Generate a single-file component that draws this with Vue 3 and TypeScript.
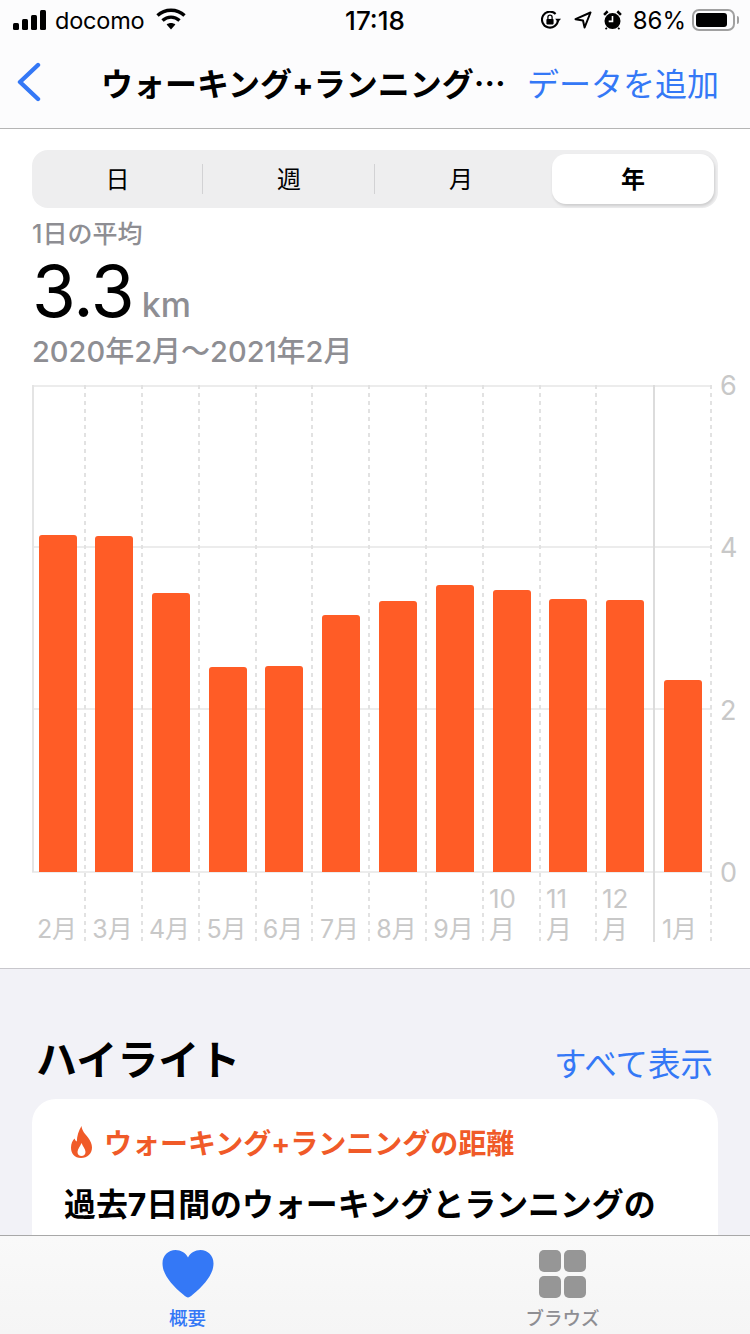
<script setup lang="ts">
interface Month { lines: string[]; width: number; height: number; solid?: boolean }
const months: Month[] = [
  { lines: ['2月'], width: 54, height: 337 },
  { lines: ['3月'], width: 57, height: 336 },
  { lines: ['4月'], width: 57, height: 279 },
  { lines: ['5月'], width: 57, height: 205 },
  { lines: ['6月'], width: 56, height: 206 },
  { lines: ['7月'], width: 57, height: 257 },
  { lines: ['8月'], width: 57, height: 271 },
  { lines: ['9月'], width: 57, height: 287 },
  { lines: ['10', '月'], width: 57, height: 282 },
  { lines: ['11', '月'], width: 56, height: 273 },
  { lines: ['12', '月'], width: 58, height: 272, solid: true },
  { lines: ['1月'], width: 57, height: 192 },
]
const segments = ['日', '週', '月', '年']
const axis = ['6', '4', '2', '0']
</script>

<template>
  <div class="page">
    <header class="top">
      <div class="status">
        <div class="status-left">
          <svg class="signal" width="34" height="20" viewBox="0 0 34 20">
            <rect x="0" y="13" width="6" height="7" rx="1.5" />
            <rect x="9" y="9" width="6" height="11" rx="1.5" />
            <rect x="18" y="5" width="6" height="15" rx="1.5" />
            <rect x="27" y="0" width="6" height="20" rx="1.5" />
          </svg>
          <span class="carrier">docomo</span>
          <svg class="wifi" width="30" height="22" viewBox="0 0 30 22" fill="none" stroke="#000" stroke-width="3.4">
            <path d="M1.5 7.5C9 0.5 21 0.5 28.5 7.5" />
            <path d="M6.5 12.5C11.5 8 18.5 8 23.5 12.5" />
            <path d="M15 21.5L10.6 16.6C13 14.6 17 14.6 19.4 16.6Z" fill="#000" stroke="none" />
          </svg>
        </div>
        <div class="time">17:18</div>
        <div class="status-right">
          <svg width="21" height="18" viewBox="0 0 21 18" fill="none" stroke="#000" stroke-width="2.1">
            <path d="M17 9A8 8 0 1 1 14.600 2.900" />
            <path d="M14.200 7.800L17 11.200L20 7.800Z" fill="#000" stroke="none" />
            <rect x="5.400" y="8" width="7.200" height="5.400" rx="0.800" fill="#000" stroke="none" />
            <path d="M6.900 8V6.200A2.100 2.100 0 0 1 11.100 6.200V8" stroke-width="1.300" />
          </svg>
          <svg class="arrow" width="18" height="18" viewBox="0 0 18 18" fill="none" stroke="#000" stroke-width="2" stroke-linejoin="round">
            <path d="M1.500 8.200L16.500 1.500L10.600 16.500L9 9.600Z" />
          </svg>
          <svg class="alarm" width="19" height="20" viewBox="0 0 18 19">
            <circle cx="9" cy="10.500" r="7.600" fill="#000" />
            <path d="M1 4.600L4.400 1.200M17 4.600L13.600 1.200" stroke="#000" stroke-width="2.400" />
            <path d="M9 5.600V10.800H5.400" stroke="#fff" stroke-width="1.500" fill="none" />
            <path d="M3.600 16.800L2.400 18.400M14.400 16.800L15.600 18.400" stroke="#000" stroke-width="1.600" />
          </svg>
          <span class="pct">86%</span>
          <div class="battery"><div class="battery-fill"></div></div>
          <div class="nub"></div>
        </div>
      </div>
      <nav class="nav">
        <svg class="back" width="26" height="40" viewBox="0 0 26 40" fill="none" stroke="#3478f6" stroke-width="4.400" stroke-linecap="round" stroke-linejoin="round">
          <path d="M22 3L4 20L22 37" />
        </svg>
        <div class="nav-title">ウォーキング+ランニング<span class="dots">…</span></div>
        <div class="nav-action">データを追加</div>
      </nav>
    </header>

    <main class="content">
      <section class="panel">
        <div class="segmented">
          <div v-for="(s, i) in segments" :key="s" class="seg" :class="{ active: i === 3, divided: i < 2 }">{{ s }}</div>
        </div>
        <div class="label">1日の平均</div>
        <div class="value"><span class="big">3.3</span><span class="unit">km</span></div>
        <div class="range">2020年2月〜2021年2月</div>

        <div class="chart-row">
          <div class="chart">
            <div
              v-for="m in months"
              :key="m.lines.join('')"
              class="col"
              :class="{ solid: m.solid }"
              :style="{ width: m.width + 'px' }"
            >
              <div class="plot">
                <div class="bar" :style="{ height: m.height + 'px' }"></div>
              </div>
              <div class="month" :class="{ multi: m.lines.length > 1 }">
                <span v-for="l in m.lines" :key="l">{{ l }}</span>
              </div>
            </div>
          </div>
          <div class="axis">
            <span v-for="a in axis" :key="a">{{ a }}</span>
          </div>
        </div>
      </section>

      <section class="highlights">
        <div class="hl-head">
          <h2>ハイライト</h2>
          <span class="all">すべて表示</span>
        </div>
        <article class="card">
          <div class="card-title">
            <svg width="26" height="32" viewBox="0 0 26 32">
              <path fill-rule="evenodd" fill="#f05a28" d="M13.500 0C14 5 17 7.500 20 11.500C22.500 15 24 18 24 21.500C24 27.500 19.500 32 13 32C6.500 32 3 27.500 3 21.500C3 17.500 4.500 14.500 6.500 12.500C7 14 7.800 15 8.800 15.600C9 10 10.500 5 13.500 0ZM13.500 17C12.500 20 9.500 23 9.500 26C9.500 28.500 11.300 30 13.500 30C15.700 30 17.500 28.500 17.500 26C17.500 23 14.500 20 13.500 17Z" />
            </svg>
            <span>ウォーキング+ランニングの距離</span>
          </div>
          <p class="card-body">過去7日間のウォーキングとランニングの距離は平均で3.0 kmでした。</p>
        </article>
      </section>
    </main>

    <footer class="tabs">
      <div class="tab on">
        <svg width="52" height="48" viewBox="0 0 52 48">
          <path fill="#3478f6" d="M26 47.500C24.800 47.500 23.500 46.500 21.500 44.800C9 34.500 0.500 24 0.500 13.500C0.500 5.500 6.300 0 13.500 0C19 0 23.500 2.800 26 7.500C28.500 2.800 33 0 38.500 0C45.700 0 51.500 5.500 51.500 13.500C51.500 24 43 34.500 30.500 44.800C28.500 46.500 27.200 47.500 26 47.500Z" />
        </svg>
        <span>概要</span>
      </div>
      <div class="tab">
        <div class="grid-icon"><i></i><i></i><i></i><i></i></div>
        <span>ブラウズ</span>
      </div>
    </footer>
  </div>
</template>

<style>
html, body { margin: 0; padding: 0; background: #fff; }
</style>

<style scoped>
.page {
  width: 750px;
  height: 1334px;
  display: flex;
  flex-direction: column;
  overflow: hidden;
  font-family: Inter, "Noto Sans CJK JP", sans-serif;
  color: #000;
  background: #f2f2f7;
}
.top { background: #fcfcfd; border-bottom: 1px solid #b5b5b5; flex: none; height: 128px; }
.status {
  height: 40px;
  display: grid;
  grid-template-columns: 1fr auto 1fr;
  align-items: center;
  box-sizing: border-box;
  padding: 0 11px 0 13px;
}
.status-left { display: flex; align-items: center; }
.signal { fill: #000; margin-top: -1px; }
.carrier { font-size: 23.5px; margin-left: 8px; letter-spacing: -0.2px; }
.wifi { margin-left: 12px; margin-top: -2px; }
.time { font-size: 26px; font-weight: 500; margin-left: -2px; }
.status-right { display: flex; align-items: center; justify-content: flex-end; }
.arrow { margin-left: 12px; }
.alarm { margin-left: 11px; }
.pct { font-size: 24px; margin-left: 11px; }
.battery {
  width: 43px;
  height: 22px;
  box-sizing: border-box;
  border: 2px solid #a0a0a0;
  border-radius: 7px;
  padding: 2px;
  margin-left: 6px;
}
.battery-fill { width: 88%; height: 100%; background: #000; border-radius: 3px; }
.nub { width: 2px; height: 8px; background: #a0a0a0; margin-left: 2px; border-radius: 0 2px 2px 0; }
.nav { display: flex; align-items: center; height: 84px; padding: 0 31px 0 16px; }
.back { flex: none; }
.nav-title { font-size: 32px; font-weight: 700; margin-left: 59px; flex: 1; white-space: nowrap; }
.dots { font-family: "Noto Sans CJK JP", sans-serif; }
.nav-action { font-size: 32px; color: #3478f6; white-space: nowrap; }

.content { flex: 1; min-height: 0; overflow: hidden; }
.panel {
  background: #fff;
  height: 840px;
  box-sizing: border-box;
  border-bottom: 1px solid #c8c7cc;
  padding: 21px 32px 0;
}
.segmented {
  display: grid;
  grid-template-columns: 171px 172px 172px 171px;
  height: 58px;
  background: #eeeeef;
  border-radius: 16px;
  padding: 4px 0;
  box-sizing: border-box;
  width: 686px;
}
.seg {
  display: flex;
  align-items: center;
  justify-content: center;
  font-size: 24px;
  padding-bottom: 4px;
  box-sizing: border-box;
  position: relative;
}
.seg.divided::after {
  content: "";
  position: absolute;
  right: 0;
  top: 10px;
  bottom: 10px;
  width: 1px;
  background: #d2d2d4;
}
.seg.active {
  background: #fff;
  border-radius: 14px;
  margin: 0 4px 0 5px;
  font-weight: 700;
  box-shadow: 1px 2px 3px rgba(0, 0, 0, 0.14);
}
.label { font-size: 25px; font-weight: 500; color: #8e8e93; margin-top: 11px; line-height: 30px; }
.value { display: flex; align-items: baseline; height: 76px; margin-top: 4px; }
.big { font-size: 71px; font-weight: 400; line-height: 76px; letter-spacing: -1px; }
.unit { font-size: 34px; font-weight: 500; color: #8e8e93; margin-left: 8px; }
.range { font-size: 29px; font-weight: 500; color: #8e8e93; line-height: 36px; margin-top: 5px; }
.chart-row { display: flex; margin-top: 15px; margin-right: -32px; }
.chart {
  display: flex;
  height: 557px;
  background:
    linear-gradient(#ececec, #ececec) 0 0 / 100% 2px no-repeat,
    linear-gradient(#ececec, #ececec) 0 161px / 100% 2px no-repeat,
    linear-gradient(#ececec, #ececec) 0 323px / 100% 2px no-repeat,
    linear-gradient(#ececec, #ececec) 0 486px / 100% 2px no-repeat;
}
.col {
  display: flex;
  flex-direction: column;
  flex: none;
  box-sizing: border-box;
  background: repeating-linear-gradient(#e2e2e2 0 4px, transparent 4px 8px) right top / 2px 100% no-repeat;
}
.col:first-child .plot { box-shadow: inset 2px 0 #e4e4e4; }
.col.solid { background: linear-gradient(#dcdcdc, #dcdcdc) right top / 2px 100% no-repeat; }
.plot { height: 487px; display: flex; align-items: flex-end; justify-content: center; flex: none; padding-right: 2px; box-sizing: border-box; }
.bar { width: 38px; background: #ff5c26; border-radius: 3px 3px 0 0; }
.month {
  flex: 1;
  display: flex;
  flex-direction: column;
  justify-content: flex-end;
  align-items: center;
  font-size: 25px;
  line-height: 31px;
  color: #c8c8c8;
  white-space: nowrap;
  margin-bottom: -3px;
  padding-right: 4px;
}
.month.multi { align-items: flex-start; padding: 0 0 0 5px; font-size: 26px; }
.col:last-child .month { padding-right: 8px; }
.axis {
  display: flex;
  flex-direction: column;
  justify-content: space-between;
  height: 515px;
  margin-left: 8px;
  font-size: 27px;
  line-height: 28px;
  color: #c8c8c8;
  margin-top: -13px;
}

.highlights { padding: 0 32px; }
.hl-head { display: flex; justify-content: space-between; align-items: center; height: 60px; margin-top: 61px; padding: 0 5px 0 4px; }
.hl-head h2 { margin: 0; font-size: 41px; font-weight: 700; line-height: 60px; }
.all { font-size: 32.500px; color: #3478f6; margin-top: 2px; }
.card { background: #fff; border-radius: 24px; margin-top: 9px; padding: 26px 32px; height: 300px; box-sizing: border-box; }
.card-title { display: flex; align-items: center; gap: 10px; color: #f05a28; font-size: 28px; font-weight: 700; margin-left: 4px; height: 34px; white-space: nowrap; }
.card-body { margin: 22px 0 0; font-size: 31.900px; font-weight: 700; line-height: 48px; width: 610px; }

.tabs {
  flex: none;
  height: 99px;
  box-sizing: border-box;
  border-top: 1px solid #a8a8a8;
  background: linear-gradient(#f9f9f9, #f5f5f5);
  display: grid;
  grid-template-columns: 1fr 1fr;
}
.tab { display: flex; flex-direction: column; align-items: center; padding-top: 14px; color: #8e8e93; font-size: 18.5px; font-weight: 500; }
.tab span { line-height: 24px; margin-top: 8px; }
.tab.on { color: #3478f6; }
.grid-icon { display: grid; grid-template-columns: 22px 22px; grid-template-rows: 22px 22px; gap: 4px 3px; height: 48px; }
.grid-icon i { background: #969696; border-radius: 5px; }
</style>
